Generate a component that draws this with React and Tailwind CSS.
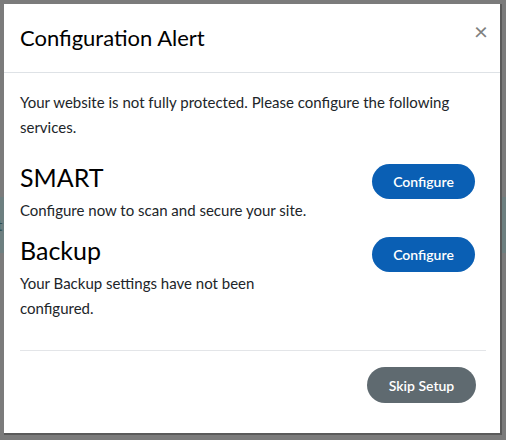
import React from 'react'

const font = { fontFamily: 'Lato, "Liberation Sans", sans-serif' }

const Service = ({ name, text }) => {
  return (
    <div className="flex justify-between items-start">
      <div className="w-[305px]">
        <h2 className="text-[25px] leading-[30px] text-black">{name}</h2>
        <p className="mt-[6px] text-[15px] leading-[25px] text-[#212529]">{text}</p>
      </div>
      <button className="mr-[9px] mt-[2px] w-[103px] h-[35px] rounded-full bg-[#0a5fb4] text-white text-[14px] font-semibold">
        Configure
      </button>
    </div>
  )
}

const App = () => {
  return (
    <div className="relative w-[506px] h-[440px] bg-[#7b7b7b] overflow-hidden" style={font}>
      {/* page behind the overlay */}
      <div className="pt-[197px]">
        <div className="h-[56px] bg-[#6d7f80] flex items-center text-[#2f4f52] text-[15px] -ml-[3px]">t</div>
      </div>

      {/* modal */}
      <div className="absolute left-[4px] top-[4px] w-[498px] h-[431px] bg-white border-r-2 border-b-2 border-[#5a5a5a] flex flex-col">
        <div className="h-[69px] flex items-center justify-between pl-[16px] pr-[12px] border-b border-[#dee2e6]">
          <h1 className="text-[22px] text-black -mt-[2px]">Configuration Alert</h1>
          <button className="text-[#808080] text-[24px] leading-none -mt-[14px]">×</button>
        </div>
        <div className="px-[16px] pt-[17px]">
          <p className="text-[15px] leading-[25px] text-[#212529]">
            Your website is not fully protected. Please configure the following services.
          </p>
          <div className="mt-[22px] flex flex-col gap-[12px]">
            <Service name="SMART" text="Configure now to scan and secure your site." />
            <Service name="Backup" text="Your Backup settings have not been configured." />
          </div>
          <div className="mt-[29px] mr-[-2px] border-t border-[#e3e5e8]"></div>
          <div className="flex justify-end pt-[16px] pr-[8px]">
            <button className="w-[109px] h-[36px] rounded-full bg-[#5f6a70] text-white text-[14px] font-semibold">
              Skip Setup
            </button>
          </div>
        </div>
      </div>
    </div>
  )
}

export default App
